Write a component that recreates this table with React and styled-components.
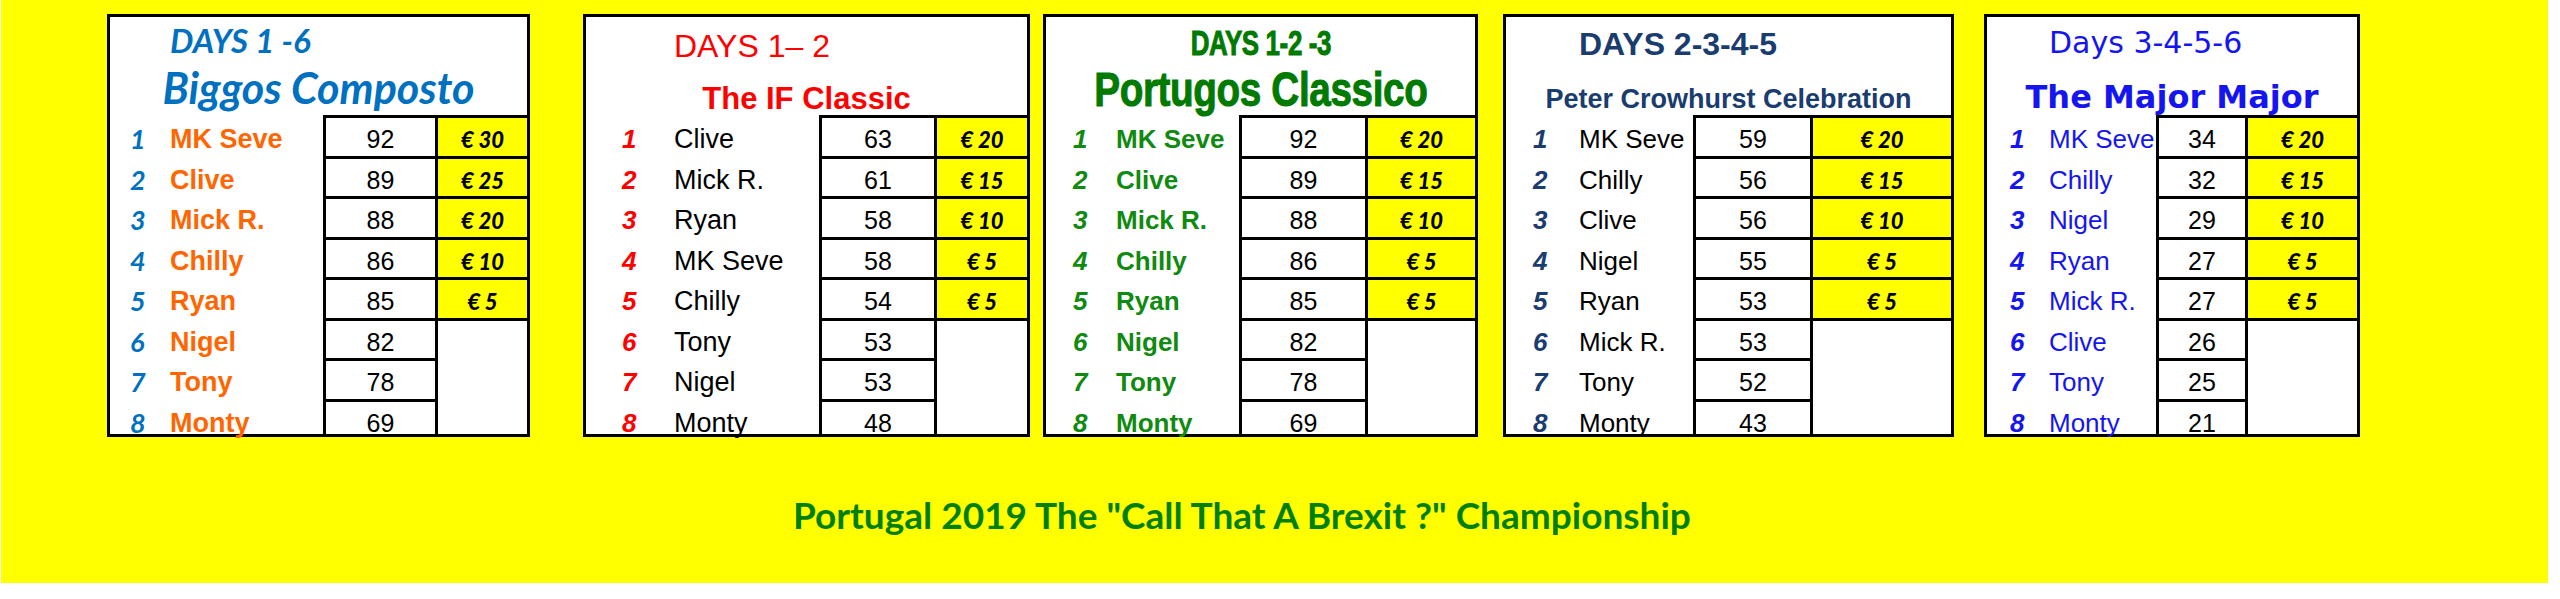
import styled, { createGlobalStyle, css } from 'styled-components';

const ARIAL = `"Liberation Sans", Arial, sans-serif`;
const CALIBRI = `Lato, "Liberation Sans", sans-serif`;
const TAHOMA = `"DejaVu Sans", Verdana, sans-serif`;

const GlobalStyle = createGlobalStyle`
  html, body {
    margin: 0;
    padding: 0;
    background: #fff;
  }
`;

// per-table typography, a rough stand-in for the original spreadsheet fonts
// squeeze: horizontal squash used to fake the condensed Impact face
const looks = {
  biggos: {
    days: { font: CALIBRI, size: 33, weight: 700, italic: true, color: '#0070c0', h: 47 },
    title: { font: CALIBRI, size: 43, weight: 700, italic: true, color: '#0070c0', h: 47 },
    rank: { font: CALIBRI, size: 27, weight: 700, italic: true, color: '#0070c0' },
    name: { font: ARIAL, size: 27, weight: 700, color: '#ff6600' },
  },
  classic: {
    days: { font: ARIAL, size: 32, weight: 400, color: '#ff0000', h: 58 },
    title: { font: ARIAL, size: 31, weight: 700, color: '#ff0000', h: 47 },
    rank: { font: ARIAL, size: 26, weight: 700, italic: true, color: '#ff0000' },
    name: { font: ARIAL, size: 27, weight: 400, color: '#000' },
  },
  portugos: {
    days: { font: ARIAL, size: 35, weight: 700, color: '#007a00', h: 51, squeeze: 0.74 },
    title: { font: ARIAL, size: 49, weight: 700, color: '#007a00', h: 42, squeeze: 0.79 },
    rank: { font: ARIAL, size: 26, weight: 700, italic: true, color: '#108a10' },
    name: { font: ARIAL, size: 26, weight: 700, color: '#108a10' },
  },
  peter: {
    days: { font: ARIAL, size: 32, weight: 700, color: '#1a3c6e', h: 54 },
    title: { font: ARIAL, size: 27, weight: 700, color: '#1a3c6e', h: 57 },
    rank: { font: ARIAL, size: 26, weight: 700, italic: true, color: '#1a3c6e' },
    name: { font: ARIAL, size: 26, weight: 400, color: '#000' },
  },
  major: {
    days: { font: TAHOMA, size: 30, weight: 400, color: '#1515f0', h: 51 },
    title: { font: TAHOMA, size: 32, weight: 700, color: '#1515f0', h: 58 },
    rank: { font: ARIAL, size: 26, weight: 700, italic: true, color: '#1515f0' },
    name: { font: ARIAL, size: 26, weight: 400, color: '#1515f0' },
  },
};

const tables = [
  {
    id: 'biggos', gap: 106, width: 423, nameW: 216, scoreW: 112, rankX: 23, nameX: 63, daysCentered: false,
    days: 'DAYS 1 -6', title: 'Biggos Composto',
    rows: [['MK Seve', 92], ['Clive', 89], ['Mick R.', 88], ['Chilly', 86], ['Ryan', 85], ['Nigel', 82], ['Tony', 78], ['Monty', 69]],
    prizes: ['€ 30', '€ 25', '€ 20', '€ 10', '€ 5'],
  },
  {
    id: 'classic', gap: 53, width: 447, nameW: 236, scoreW: 115, rankX: 39, nameX: 91, daysCentered: false,
    days: 'DAYS 1– 2', title: 'The IF Classic',
    rows: [['Clive', 63], ['Mick R.', 61], ['Ryan', 58], ['MK Seve', 58], ['Chilly', 54], ['Tony', 53], ['Nigel', 53], ['Monty', 48]],
    prizes: ['€ 20', '€ 15', '€ 10', '€ 5', '€ 5'],
  },
  {
    id: 'portugos', gap: 13, width: 435, nameW: 196, scoreW: 126, rankX: 30, nameX: 73, daysCentered: true,
    days: 'DAYS 1-2 -3', title: 'Portugos Classico',
    rows: [['MK Seve', 92], ['Clive', 89], ['Mick R.', 88], ['Chilly', 86], ['Ryan', 85], ['Nigel', 82], ['Tony', 78], ['Monty', 69]],
    prizes: ['€ 20', '€ 15', '€ 10', '€ 5', '€ 5'],
  },
  {
    id: 'peter', gap: 25, width: 451, nameW: 190, scoreW: 117, rankX: 30, nameX: 76, daysCentered: false,
    days: 'DAYS 2-3-4-5', title: 'Peter Crowhurst Celebration',
    rows: [['MK Seve', 59], ['Chilly', 56], ['Clive', 56], ['Nigel', 55], ['Ryan', 53], ['Mick R.', 53], ['Tony', 52], ['Monty', 43]],
    prizes: ['€ 20', '€ 15', '€ 10', '€ 5', '€ 5'],
  },
  {
    id: 'major', gap: 30, width: 376, nameW: 172, scoreW: 89, rankX: 26, nameX: 65, daysCentered: false,
    days: 'Days 3-4-5-6', title: 'The Major Major',
    rows: [['MK Seve', 34], ['Chilly', 32], ['Nigel', 29], ['Ryan', 27], ['Mick R.', 27], ['Clive', 26], ['Tony', 25], ['Monty', 21]],
    prizes: ['€ 20', '€ 15', '€ 10', '€ 5', '€ 5'],
  },
];

const typeface = (s) => css`
  font-family: ${s.font};
  font-size: ${s.size}px;
  font-weight: ${s.weight};
  font-style: ${s.italic ? 'italic' : 'normal'};
  color: ${s.color};
`;

const Page = styled.div`
  width: 2547px;
  height: 583px;
  margin-left: 1px;
  background: #ffff00;
  display: flex;
  flex-direction: column;
`;

const Boards = styled.div`
  display: flex;
  align-items: flex-start;
  padding-top: 14px;
`;

const Board = styled.section`
  box-sizing: border-box;
  width: ${({ $width }) => $width}px;
  height: 423px;
  margin-left: ${({ $gap }) => $gap}px;
  border: 3px solid #000;
  background: #fff;
  display: flex;
  flex-direction: column;
`;

const Heading = styled.header`
  height: 98px;
  flex-shrink: 0;
  white-space: nowrap;
`;

const DaysLine = styled.div`
  ${({ $s }) => typeface($s)};
  height: ${({ $s }) => $s.h}px;
  line-height: ${({ $s }) => $s.h}px;
  padding-left: ${({ $indent }) => $indent}px;
  text-align: ${({ $centered }) => ($centered ? 'center' : 'left')};
`;

const TitleLine = styled.div`
  ${({ $s }) => typeface($s)};
  height: ${({ $s }) => $s.h}px;
  line-height: ${({ $s }) => $s.h}px;
  text-align: center;
`;

const Squeezed = styled.span`
  display: inline-block;
  transform: scaleX(${({ $k }) => $k || 1});
  letter-spacing: ${({ $k }) => ($k ? '-0.5px' : 'normal')};
  -webkit-text-stroke: ${({ $k }) => ($k ? '1px currentColor' : '0')};
`;

const Grid = styled.div`
  display: grid;
  grid-template-columns: ${({ $nameW, $scoreW }) => `${$nameW - 3}px ${$scoreW}px 1fr`};
  grid-template-rows: repeat(7, 40.5px) minmax(0, 1fr);
  flex: 1;
  min-height: 0;
`;

const NameCell = styled.div`
  grid-column: 1;
  display: flex;
  min-height: 0;
  padding-top: 3px;
  padding-left: ${({ $rankX }) => $rankX - 3}px;
  line-height: 42px;
  white-space: nowrap;
`;

const Rank = styled.span`
  ${({ $s }) => typeface($s)};
  width: ${({ $w }) => $w}px;
  flex-shrink: 0;
`;

const Player = styled.span`
  ${({ $s }) => typeface($s)};
`;

const ScoreCell = styled.div`
  grid-column: 2;
  min-height: 0;
  border-top: 3px solid #000;
  border-left: 3px solid #000;
  font-family: ${ARIAL};
  font-size: 25px;
  line-height: 42px;
  text-align: center;
  color: #000;
`;

const PrizeCell = styled.div`
  grid-column: 3;
  grid-row: ${({ $span }) => ($span ? `span ${$span}` : 'auto')};
  min-height: 0;
  border-top: 3px solid #000;
  border-left: 3px solid #000;
  background: ${({ $won }) => ($won ? '#ffff00' : '#fff')};
  font-family: ${CALIBRI};
  font-weight: 900;
  font-style: italic;
  font-size: 22px;
  line-height: 43px;
  text-align: center;
  color: #000;
`;

const Footer = styled.div`
  margin-top: 48px;
  padding-left: 792px;
  font-family: Lato, "Liberation Sans", sans-serif;
  font-weight: 700;
  font-size: 37px;
  line-height: 60px;
  color: #008000;
  white-space: nowrap;
`;

const Leaderboard = ({ t }) => {
  const look = looks[t.id];
  return (
    <Board $width={t.width} $gap={t.gap}>
      <Heading>
        <DaysLine $s={look.days} $indent={t.daysCentered ? 0 : t.nameX - 3} $centered={t.daysCentered}>
          <Squeezed $k={look.days.squeeze}>{t.days}</Squeezed>
        </DaysLine>
        <TitleLine $s={look.title}>
          <Squeezed $k={look.title.squeeze}>{t.title}</Squeezed>
        </TitleLine>
      </Heading>
      <Grid $nameW={t.nameW} $scoreW={t.scoreW}>
        {t.rows.map(([name, score], i) => [
          <NameCell key={`n${i}`} $rankX={t.rankX}>
            <Rank $s={look.rank} $w={t.nameX - t.rankX}>{i + 1}</Rank>
            <Player $s={look.name}>{name}</Player>
          </NameCell>,
          <ScoreCell key={`s${i}`}>{score}</ScoreCell>,
          i < 5 ? (
            <PrizeCell key={`p${i}`} $won>{t.prizes[i]}</PrizeCell>
          ) : i === 5 ? (
            <PrizeCell key="rest" $span={3} />
          ) : null,
        ])}
      </Grid>
    </Board>
  );
};

export default function App() {
  return (
    <>
      <GlobalStyle />
      <Page>
        <Boards>
          {tables.map((t) => (
            <Leaderboard key={t.id} t={t} />
          ))}
        </Boards>
        <Footer>Portugal 2019 The "Call That A Brexit ?" Championship</Footer>
      </Page>
    </>
  );
}
